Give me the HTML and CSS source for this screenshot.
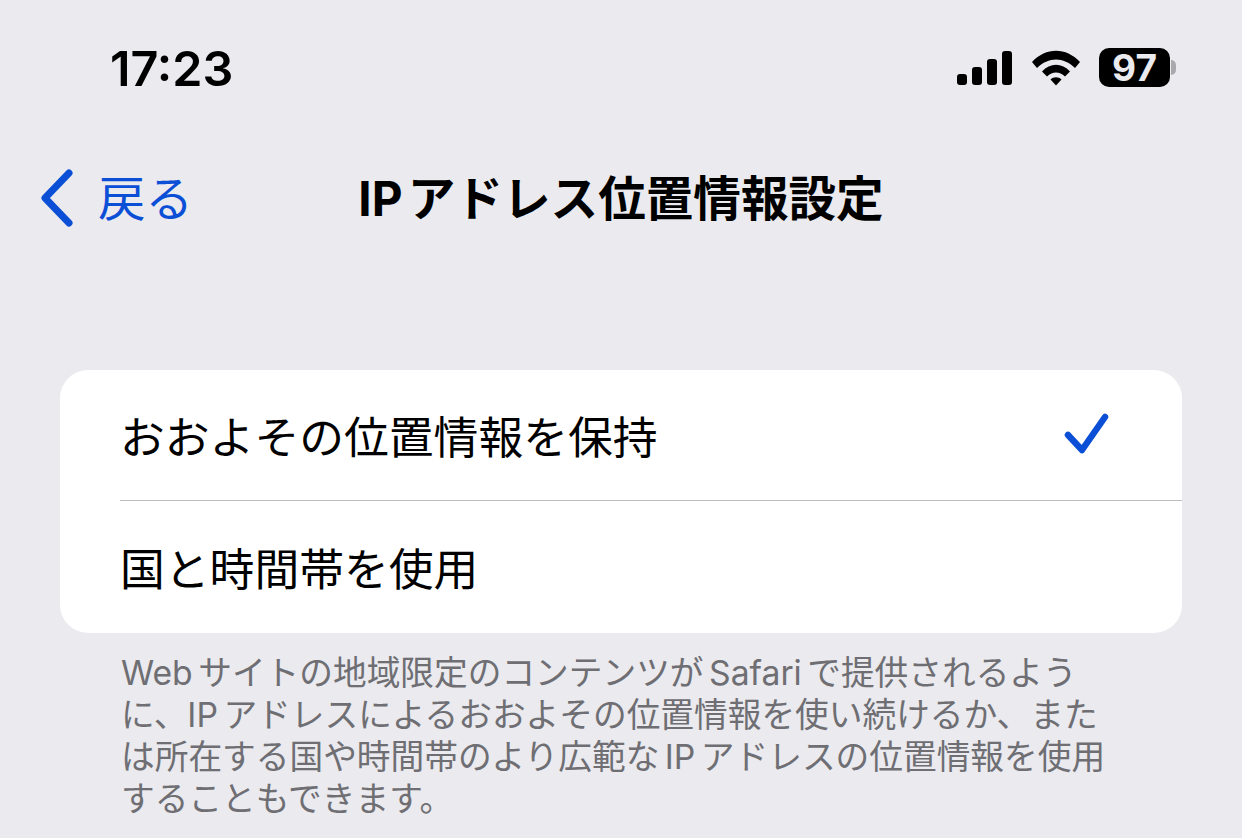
FILE: index.html
```html
<!DOCTYPE html>
<html lang="ja">
<head>
<meta charset="utf-8">
<title>IPアドレス位置情報設定</title>
<link rel="stylesheet" href="styles.css">
</head>
<body>
<div class="status">
  <span class="time">17:23</span>
  <div class="status-icons">
    <svg class="signal" width="56" height="36" viewBox="0 0 56 36"><rect x="0" y="24" width="10" height="11" rx="3"/><rect x="15" y="17" width="10" height="18" rx="3"/><rect x="30" y="9" width="10" height="26" rx="3"/><rect x="45" y="1" width="10" height="34" rx="3"/></svg>
    <svg class="wifi" width="48" height="36" viewBox="0 0 48 36"><path d="M0 12C14 -3 34 -3 48 12L43 18C31.500 6.500 16.500 6.500 5 18Z"/><path d="M10 21.500C18 12.500 30 12.500 38 21.500L33 26.500C27.500 21 20.500 21 15 26.500Z"/><path d="M18.500 29.500C21.500 26.500 26.500 26.500 29.500 29.500L24 35.500Z"/></svg>
    <div class="battery"><span class="level">97</span><span class="nub"></span></div>
  </div>
</div>
<nav class="nav">
  <a class="back">
    <svg width="36" height="60" viewBox="0 0 36 60"><path d="M31 4L7 29L31 54" fill="none" stroke="#0a4fd6" stroke-width="7" stroke-linecap="round" stroke-linejoin="round"/></svg>
    <span>戻る</span>
  </a>
  <h1 class="title">IP アドレス位置情報設定</h1>
</nav>
<main class="content">
  <ul class="card">
    <li class="row first"><span class="label">おおよその位置情報を保持</span>
      <svg class="check" width="46" height="46" viewBox="0 0 46 46"><path d="M4 23L18 38L41 5" fill="none" stroke="#0a4fd6" stroke-width="6.500" stroke-linecap="round" stroke-linejoin="round"/></svg>
    </li>
    <li class="row"><span class="label">国と時間帯を使用</span></li>
  </ul>
  <p class="footer">Web サイトの地域限定のコンテンツが Safari で提供されるよう<br>に、IP アドレスによるおおよその位置情報を使い続けるか、また<br>は所在する国や時間帯のより広範な IP アドレスの位置情報を使用<br>することもできます。</p>
</main>
</body>
</html>
```
FILE: styles.css
```css
* { box-sizing: border-box; margin: 0; padding: 0; }
html, body { width: 1242px; height: 838px; overflow: hidden; }
body {
  background: #eaeaef;
  color: #000;
  font-family: "Inter", "Noto Sans CJK JP", sans-serif;
}
.status {
  height: 136px;
  padding: 41px 72px 0 110px;
  display: flex;
  justify-content: space-between;
  align-items: flex-start;
}
.time {
  font-family: "Inter", sans-serif;
  font-weight: 600;
  font-size: 48.500px;
  line-height: 56px;
}
.status-icons { display: flex; align-items: center; gap: 19px; padding-top: 7px; }
.battery {
  position: relative;
  width: 71px;
  height: 39px;
  background: #000;
  border-radius: 10px;
  color: #eaeaef;
  display: flex;
  align-items: center;
  justify-content: center;
}
.level { font-family: "Inter", sans-serif; font-weight: 700; font-size: 37px; line-height: 39px; }
.nub {
  position: absolute;
  left: 72px;
  top: 12px;
  width: 5px;
  height: 15px;
  background: #a9a9ad;
  border-radius: 0 5px 5px 0;
}
.nav {
  height: 126px;
  position: relative;
  display: flex;
  align-items: center;
  justify-content: center;
}
.back {
  position: absolute;
  left: 38px;
  top: 33px;
  display: flex;
  align-items: center;
  gap: 24px;
  color: #0a4fd6;
  font-size: 47.400px;
  line-height: 60px;
}
.title {
  font-size: 47.600px;
  font-weight: 700;
  line-height: 60px;
  word-spacing: -6px;
}
.content { padding: 108px 60px 0; }
.card {
  list-style: none;
  background: #fff;
  border-radius: 28px;
  padding-left: 60px;
}
.row {
  height: 132px;
  display: flex;
  align-items: center;
  justify-content: space-between;
  padding-right: 72px;
  font-size: 44.800px;
  font-weight: 400;
}
.label { margin-bottom: 2px; }
.row.first { border-bottom: 1px solid #bdbdc0; height: 131px; }
.footer {
  margin-top: 19px;
  padding-left: 61px;
  font-size: 33.700px;
  line-height: 42px;
  color: #6e6e73;
  white-space: nowrap;
  word-spacing: -4px;
}
```
